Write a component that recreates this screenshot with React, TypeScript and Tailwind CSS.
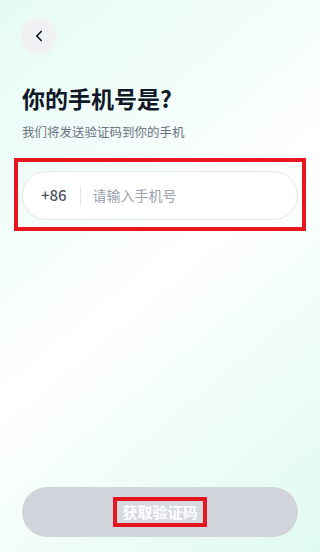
import React, { useState } from 'react';
import { ChevronLeft } from 'lucide-react';

const font = { fontFamily: '"Noto Sans CJK SC", "Noto Sans", sans-serif' };

export default function App() {
  const [phone, setPhone] = useState('');

  return (
    <div
      className="flex h-[552px] w-[320px] flex-col overflow-hidden bg-[linear-gradient(140deg,#e6fbf6_0%,#f5fdfb_35%,#ffffff_50%,#f4fdfa_65%,#e0faf2_100%)] px-[22px]"
      style={font}
    >
      <button className="ml-[-1px] mt-[18px] flex h-[36px] w-[36px] items-center justify-center rounded-full bg-[#eff1f3] text-[#111827]">
        <ChevronLeft size={18} strokeWidth={2.2} />
      </button>

      <h1 className="mt-[29px] text-[23px] font-bold leading-[30px] text-[#111827]">你的手机号是?</h1>
      <p className="mt-[10px] text-[12.5px] leading-[18px] text-[#6b7280]">我们将发送验证码到你的手机</p>

      {/* highlighted phone field */}
      <div className="-mx-[8px] mt-[17px] border-4 border-[#e8161f] px-[4px] pb-[7px] pt-[9px]">
        <div className="flex h-[49px] items-center rounded-full border border-[#e5e7eb] bg-white">
          <span className="pl-[18px] pr-[13px] text-[15px] font-medium text-[#4b5563]">+86</span>
          <span className="h-[20px] w-px bg-[#e5e7eb]" />
          <input
            value={phone}
            onChange={e => setPhone(e.target.value)}
            placeholder="请输入手机号"
            className="ml-[12px] w-full bg-transparent text-[14px] text-[#111827] outline-none placeholder:text-[#9ca3af]"
          />
        </div>
      </div>

      <div className="flex-1" />

      <button className="mb-[15px] flex h-[50px] items-center justify-center rounded-full bg-[#d1d5db]">
        <span className="border-[4px] border-[#e8161f] bg-[#d7dadf] px-[5px] text-[15px] font-bold leading-[22px] text-white">
          获取验证码
        </span>
      </button>
    </div>
  );
}
